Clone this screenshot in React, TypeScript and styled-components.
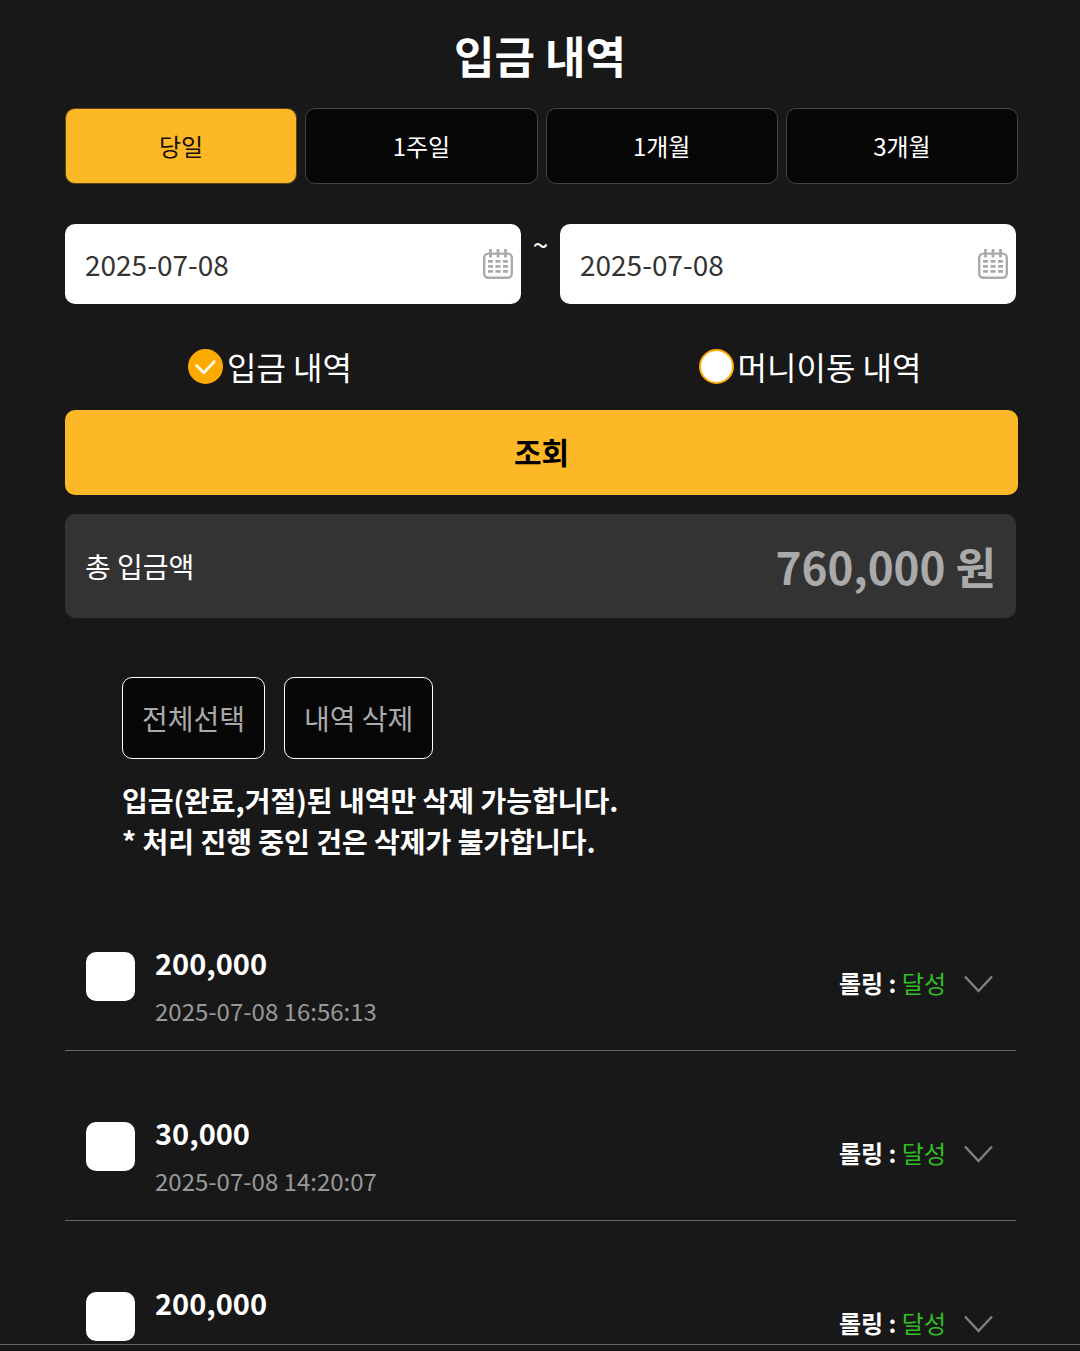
import React, { useState } from "react";
import styled, { createGlobalStyle } from "styled-components";

const GlobalStyle = createGlobalStyle`
  *, *::before, *::after { box-sizing: border-box; }
  body {
    margin: 0;
    background: #181818;
    color: #fff;
    font-family: "Noto Sans CJK KR", "Noto Sans", sans-serif;
  }
  button, input { font: inherit; }
`;

const Shell = styled.div`
  display: flex;
  flex-direction: column;
  height: 100vh;
`;

const Content = styled.main`
  flex: 1;
  min-height: 0;
  overflow-y: auto;
  scrollbar-width: none;
`;

const BottomBar = styled.footer`
  flex: none;
  height: 7px;
  border-top: 1px solid #666;
  background: #171717;
`;

const Section = styled.section<{ $wide?: boolean }>`
  padding: 0 ${(p) => (p.$wide ? 62 : 64)}px 0 65px;
`;

const Title = styled.h1`
  margin: 0;
  padding: 23px 0 21px;
  font-size: 44px;
  line-height: 64px;
  font-weight: 700;
  text-align: center;
`;

const Tabs = styled.div`
  display: grid;
  grid-template-columns: repeat(4, 1fr);
  gap: 8px;
`;

const Tab = styled.button<{ $active: boolean }>`
  height: 76px;
  padding: 0;
  border: 1px solid ${(p) => (p.$active ? "#5c4617" : "#444")};
  border-radius: 10px;
  background: ${(p) => (p.$active ? "#fdb827" : "#070707")};
  color: ${(p) => (p.$active ? "#181008" : "#fff")};
  font-size: 24px;
  line-height: 36px;
  cursor: pointer;
`;

const DateRange = styled.div`
  display: flex;
  margin-top: 40px;
`;

const DateBox = styled.label`
  flex: 1;
  min-width: 0;
  display: flex;
  align-items: center;
  height: 80px;
  padding: 0 8px 0 20px;
  border-radius: 10px;
  background: #fff;
`;

const DateInput = styled.input`
  flex: 1;
  min-width: 0;
  height: 44px;
  padding: 0;
  border: 0;
  outline: 0;
  background: transparent;
  color: #333;
  font-size: 28px;
`;

const Tilde = styled.span`
  width: 39px;
  font-size: 28px;
  line-height: 40px;
  text-align: center;
`;

const RadioRow = styled.div`
  display: grid;
  grid-template-columns: 1fr 1fr;
  margin-top: 39px;
`;

const RadioLabel = styled.label`
  display: flex;
  align-items: center;
  justify-content: center;
  gap: 4px;
  font-size: 32px;
  line-height: 46px;
  cursor: pointer;
`;

const RadioMark = styled.span`
  display: grid;
  width: 35px;
  height: 35px;

  > * {
    grid-area: 1 / 1;
  }
  > svg {
    pointer-events: none;
    z-index: 1;
  }
`;

const RadioInput = styled.input`
  appearance: none;
  width: 35px;
  height: 35px;
  margin: 0;
  border: 2px solid #fda900;
  border-radius: 50%;
  background: #fff;

  &:checked {
    background: #fda900;
  }
`;

const Submit = styled.button`
  width: 100%;
  height: 85px;
  margin-top: 21px;
  padding: 0 0 4px;
  border: 0;
  border-radius: 10px;
  background: #fdb827;
  color: #000;
  font-size: 30px;
  font-weight: 700;
  cursor: pointer;
`;

const Total = styled.div`
  display: flex;
  align-items: center;
  justify-content: space-between;
  height: 104px;
  margin-top: 19px;
  padding: 0 20px;
  border-radius: 10px;
  background: #333;
`;

const TotalLabel = styled.span`
  font-size: 28px;
`;

const TotalValue = styled.strong`
  color: #aaa;
  font-size: 44px;
  font-weight: 700;
`;

const Manage = styled.section`
  padding: 59px 122px 0;
`;

const Actions = styled.div`
  display: flex;
  gap: 19px;
`;

const Action = styled.button`
  height: 82px;
  padding: 0 19px;
  border: 1px solid #fff;
  border-radius: 10px;
  background: #070707;
  color: #aaa;
  font-size: 28px;
  cursor: pointer;
`;

const Notice = styled.p`
  margin: 21px 0 0;
  font-size: 28px;
  line-height: 41px;
  font-weight: 700;
`;

const List = styled.ul`
  margin: 19px 0 0;
  padding: 0;
  list-style: none;
`;

const Row = styled.li`
  display: flex;
  align-items: flex-start;
  height: 170px;
  padding: 56px 23px 0 21px;
  border-bottom: 1px solid #666;
`;

const Check = styled.input`
  appearance: none;
  flex: none;
  width: 49px;
  height: 49px;
  margin: 15px 20px 0 0;
  border-radius: 10px;
  background: #fff;

  &:checked {
    background: #fdb827;
  }
`;

const Info = styled.div`
  flex: 1;
  min-width: 0;
  display: flex;
  flex-direction: column;
  align-items: flex-start;
`;

const Amount = styled.label`
  font-size: 29px;
  line-height: 50px;
  font-weight: 700;
`;

const Time = styled.time`
  color: #999;
  font-size: 24px;
  line-height: 48px;
`;

const Status = styled.div`
  display: flex;
  align-items: center;
  height: 94px;
`;

const StatusText = styled.span`
  padding-bottom: 4px;
  font-size: 24px;
`;

const StatusValue = styled.span`
  color: #2fbf24;
`;

const Expand = styled.button`
  display: flex;
  margin: 0 0 0 18px;
  padding: 0;
  border: 0;
  background: transparent;
  cursor: pointer;
`;

const CalendarIcon = () => (
  <svg width="30" height="30" viewBox="0 0 30 30" fill="none" stroke="#aaa" aria-hidden="true">
    <rect x="1.2" y="4.6" width="27.6" height="24.2" rx="4.2" strokeWidth="2.4" />
    <path d="M7.5 0v8.5M15 0v8.5M22.5 0v8.5" strokeWidth="2.8" />
    <path
      d="M5 12.4h5M12.5 12.4h5M20 12.4h5M5 17.4h5M12.5 17.4h5M20 17.4h5M5 22.4h5M12.5 22.4h5M20 22.4h5"
      strokeWidth="2.6"
    />
  </svg>
);

const CheckIcon = () => (
  <svg width="35" height="35" viewBox="0 0 35 35" fill="none" aria-hidden="true">
    <path
      d="M8.5 16.5L15.8 23.8L26.3 12.8"
      stroke="#fffbe8"
      strokeWidth="2.8"
      strokeLinecap="round"
      strokeLinejoin="round"
    />
  </svg>
);

const ChevronIcon = () => (
  <svg width="29" height="18" viewBox="0 0 29 18" fill="none" aria-hidden="true">
    <path d="M1 1.5L14.5 16L28 1.5" stroke="#808080" strokeWidth="2.4" />
  </svg>
);

const periods = ["당일", "1주일", "1개월", "3개월"];
const kinds = ["입금 내역", "머니이동 내역"];
const deposits = [
  { amount: "200,000", time: "2025-07-08 16:56:13" },
  { amount: "30,000", time: "2025-07-08 14:20:07" },
  { amount: "200,000" },
];

export default function App() {
  const [period, setPeriod] = useState(periods[0]);
  const [kind, setKind] = useState(kinds[0]);

  return (
    <Shell>
      <GlobalStyle />
      <Content>
        <Title>입금 내역</Title>
        <Section $wide>
          <Tabs>
            {periods.map((p) => (
              <Tab key={p} type="button" $active={p === period} onClick={() => setPeriod(p)}>
                {p}
              </Tab>
            ))}
          </Tabs>
        </Section>

        <Section>
          <DateRange>
            <DateBox>
              <DateInput type="text" defaultValue="2025-07-08" />
              <CalendarIcon />
            </DateBox>
            <Tilde>~</Tilde>
            <DateBox>
              <DateInput type="text" defaultValue="2025-07-08" />
              <CalendarIcon />
            </DateBox>
          </DateRange>
        </Section>

        <RadioRow>
          {kinds.map((k) => (
            <RadioLabel key={k}>
              <RadioMark>
                <RadioInput type="radio" name="kind" checked={k === kind} onChange={() => setKind(k)} />
                {k === kind && <CheckIcon />}
              </RadioMark>
              {k}
            </RadioLabel>
          ))}
        </RadioRow>

        <Section $wide>
          <Submit type="button">조회</Submit>
        </Section>

        <Section>
          <Total>
            <TotalLabel>총 입금액</TotalLabel>
            <TotalValue>760,000 원</TotalValue>
          </Total>
        </Section>

        <Manage>
          <Actions>
            <Action type="button">전체선택</Action>
            <Action type="button">내역 삭제</Action>
          </Actions>
          <Notice>
            입금(완료,거절)된 내역만 삭제 가능합니다.
            <br />* 처리 진행 중인 건은 삭제가 불가합니다.
          </Notice>
        </Manage>

        <Section>
          <List>
            {deposits.map((d, i) => (
              <Row key={i}>
                <Check type="checkbox" id={`deposit-${i}`} />
                <Info>
                  <Amount htmlFor={`deposit-${i}`}>{d.amount}</Amount>
                  {d.time && <Time>{d.time}</Time>}
                </Info>
                <Status>
                  <StatusText>
                    <b>롤링 :</b> <StatusValue>달성</StatusValue>
                  </StatusText>
                  <Expand type="button">
                    <ChevronIcon />
                  </Expand>
                </Status>
              </Row>
            ))}
          </List>
        </Section>
      </Content>
      <BottomBar />
    </Shell>
  );
}
